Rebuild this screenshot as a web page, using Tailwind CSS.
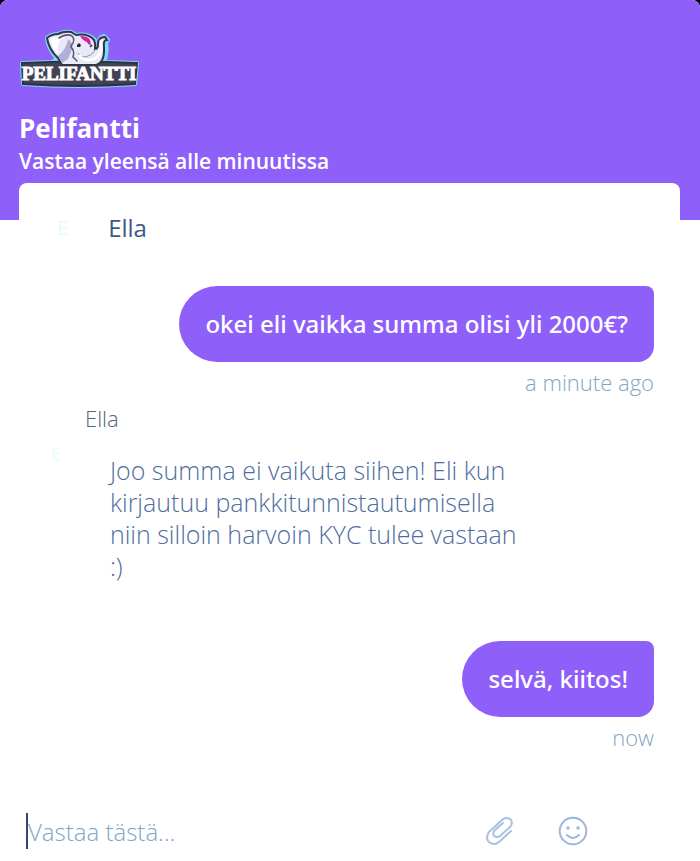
<!DOCTYPE html>
<html lang="fi">
<head>
<meta charset="utf-8">
<meta name="viewport" content="width=device-width, initial-scale=1">
<title>Pelifantti</title>
<script src="https://cdn.jsdelivr.net/npm/@tailwindcss/browser@4"></script>
</head>
<body class="bg-black font-['Open_Sans','Noto_Sans',sans-serif]">
<div class="flex min-h-screen flex-col overflow-hidden rounded-t-[8px] bg-white">
  <header class="bg-[#8f5ff9] px-[19px] pt-7 pb-11 text-white">
    <svg class="h-[62px] w-[120px]" viewBox="0 0 120 62" role="img" aria-label="Pelifantti">
      <path d="M3 35 34 34 38 30Q29 21 28 10Q32 6 39 6Q45 3 52 4L57 7Q68 5 75 11L79 18Q79 9 85 8L89 12 87 15Q89 25 85 34L118 35 116 56Q60 60 4 56Z" stroke="#78dcf4" stroke-width="4" stroke-linejoin="round" fill="#78dcf4"/>
      <path d="M3 35Q60 32 118 35L116 56Q60 60 4 56Z" fill="#424255" stroke="#303044" stroke-width="2"/>
      <path d="M28 10Q33 6 39 6Q45 3 52 4L57 7Q69 5 75 12Q77 16 76 21Q79 21 79 16Q79 9 86 9L88 12Q84 12 85 19Q86 38 73 37L43 37 39 30Q30 22 28 10Z" fill="#e9e9f7" stroke="#34344b" stroke-width="2"/>
      <path d="M31 11Q38 7 46 9Q37 13 39 26Q33 20 31 11Z" fill="#fff"/>
      <path d="M39 28Q47 22 49 11Q55 15 53 21L49 31 43 35Z" fill="#b1afd6"/>
      <path d="M40 10Q48 5 53 8Q57 12 52 18M52 19Q56 23 54 29L58 33" fill="none" stroke="#56567a" stroke-width="1.5" stroke-linecap="round"/>
      <path d="M59 25Q62 31 69 28Q75 26 76 21" fill="none" stroke="#8a8ab0" stroke-width="1"/>
      <path d="M60 27Q64 33 71 32Q80 31 82 22Q82 17 82 12" fill="none" stroke="#fff" stroke-width="2.5"/>
      <path d="M61 8Q69 8 71 12L72 17Q69 17 68 14Q64 13 61 8Z" fill="#d41fa8"/>
      <path d="M58 17 60 15 62 17 61 19 58 19Z" fill="#222238"/>
      <path d="M71 19 73 17" stroke="#222238" stroke-width="1.5"/>
      <text x="60" y="52" text-anchor="middle" font-family="'Liberation Serif', serif" font-weight="700" font-size="19" fill="#fff" stroke="#fff" stroke-width="1">PELIFANTTI</text>
    </svg>
    <h1 class="mt-5 text-[26px] leading-9 font-bold">Pelifantti</h1>
    <p class="text-[21px] leading-[30px] font-semibold">Vastaa yleensä alle minuutissa</p>
  </header>
  <main class="mr-5 -mt-[37px] ml-[19px] flex flex-1 flex-col rounded-t-[8px] bg-white">
    <div class="flex items-center gap-10 pt-[27px] pl-[38px] leading-9">
      <span class="text-xl text-[#e4fcfb]">E</span>
      <h2 class="text-2xl leading-9 font-medium text-[#3f5687]">Ella</h2>
    </div>
    <section class="mt-10 mr-[26px] flex flex-col items-end" aria-label="Keskustelu">
      <p class="rounded-l-[38px] rounded-tr-[8px] rounded-br-[16px] bg-[#8f5ff9] px-[26px] py-5 font-['Noto_Sans',sans-serif] text-2xl leading-9 font-medium text-white">okei eli vaikka summa olisi yli 2000€?</p>
      <time class="mt-1 text-[22px] leading-8 font-light text-[#82a5c5]">a minute ago</time>
    </section>
    <section class="mt-1">
      <h3 class="pl-[66px] text-[22px] leading-8 font-light text-[#536780]">Ella</h3>
      <div class="flex gap-[50px] pt-1 pl-8">
        <span class="text-base leading-8 text-[#e4fcfb]">E</span>
        <p class="mt-4 max-w-[420px] text-[25px] leading-8 font-light text-[#4f6d9f]">Joo summa ei vaikuta siihen! Eli kun kirjautuu pankkitunnistautumisella niin silloin harvoin KYC tulee vastaan :)</p>
      </div>
    </section>
    <section class="mt-[59px] mr-[26px] flex flex-col items-end">
      <p class="rounded-l-[38px] rounded-tr-[8px] rounded-br-[16px] bg-[#8f5ff9] px-[26px] py-5 font-['Noto_Sans',sans-serif] text-2xl leading-9 font-medium text-white">selvä, kiitos!</p>
      <time class="mt-1 text-[22px] leading-8 font-light text-[#82a5c5]">now</time>
    </section>
    <form class="mt-auto mr-[92px] mb-3 ml-[7px] flex items-center">
      <span class="h-9 w-[2px] shrink-0 bg-[#36486f]"></span>
      <input type="text" aria-label="Vastaa tästä" placeholder="Vastaa tästä..." class="h-9 min-w-0 flex-1 text-2xl font-light text-[#3f5687] caret-transparent outline-none placeholder:text-[#82a5c5]">
      <button type="button" aria-label="Lisää liite" class="mr-[42px]">
        <svg class="size-[30px]" viewBox="0 0 30 30" fill="none" stroke="#a9c0e0" stroke-width="2" stroke-linecap="round" stroke-linejoin="round"><path d="M25 15 13 26Q8 30 3 26Q-1 22 3 16L16 4Q21 0 25 4Q27 8 24 11L14 20Q11 22 8 20Q6 17 9 14L17 7"/></svg>
      </button>
      <button type="button" aria-label="Valitse emoji">
        <svg class="size-[30px]" viewBox="0 0 30 30" fill="none" stroke="#9fb5dc" stroke-width="2" stroke-linecap="round"><circle cx="15" cy="15" r="13.3"/><path d="M9 19Q15 25 21 19"/><g fill="#9fb5dc" stroke="none"><circle cx="10" cy="12" r="1.7"/><circle cx="20" cy="12" r="1.7"/></g></svg>
      </button>
    </form>
  </main>
</div>
</body>
</html>
